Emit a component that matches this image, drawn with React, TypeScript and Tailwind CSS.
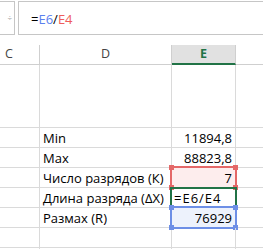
import React from "react";

const font = { fontFamily: '"Open Sans", "Liberation Sans", sans-serif' };

function Row({
  h,
  d,
  e,
  eAlign = "right",
  sel,
}: {
  h: string;
  d?: string;
  e?: string;
  eAlign?: "left" | "right";
  sel?: "red" | "green" | "blue";
}) {
  return (
    <div className={`flex ${h} border-b border-[#dadada]`}>
      <div className="w-[40px] shrink-0 border-r border-[#dadada]" />
      <div className="w-[132px] shrink-0 border-r border-[#dadada] flex items-end pl-[3px] pb-[2px] text-[13px] leading-none text-black whitespace-nowrap">
        {d}
      </div>
      <div
        className={`relative w-[64px] shrink-0 border-r border-[#dadada] flex items-end pb-[2px] text-[13px] leading-none text-black whitespace-nowrap ${
          eAlign === "right" ? "justify-end pr-[3px]" : "justify-start pl-[2px] tracking-[1px]"
        } ${sel === "red" ? "bg-[#fdeded]" : sel === "blue" ? "bg-[#edf2fc]" : ""}`}
      >
        {sel === "red" && (
          <div className="absolute left-[-2px] top-[-2px] right-[-2px] bottom-[-2px] border-2 border-[#e46868] pointer-events-none">
            <div className="absolute left-[-3px] top-[-3px] w-[5px] h-[5px] bg-[#e46868]" />
            <div className="absolute right-[-3px] top-[-3px] w-[5px] h-[5px] bg-[#e46868]" />
            <div className="absolute left-[-3px] bottom-[-3px] w-[5px] h-[5px] bg-[#e46868]" />
            <div className="absolute right-[-3px] bottom-[-3px] w-[5px] h-[5px] bg-[#e46868]" />
          </div>
        )}
        {sel === "blue" && (
          <div className="absolute left-[-2px] top-[-2px] right-[-2px] bottom-[-2px] border-2 border-[#6d8fe6] pointer-events-none">
            <div className="absolute left-[-3px] top-[-3px] w-[5px] h-[5px] bg-[#6d8fe6]" />
            <div className="absolute right-[-3px] top-[-3px] w-[5px] h-[5px] bg-[#6d8fe6]" />
            <div className="absolute left-[-3px] bottom-[-3px] w-[5px] h-[5px] bg-[#6d8fe6]" />
            <div className="absolute right-[-3px] bottom-[-3px] w-[5px] h-[5px] bg-[#6d8fe6]" />
          </div>
        )}
        {sel === "green" && (
          <div className="absolute left-[-2px] top-[-1px] right-[-2px] bottom-[-1px] border-2 border-[#217346] pointer-events-none" />
        )}
        <span className="relative">{e}</span>
      </div>
      <div className="flex-1" />
    </div>
  );
}

export default function App() {
  return (
    <div className="w-[263px] h-[249px] bg-white overflow-hidden" style={font}>
      {/* formula bar */}
      <div className="flex pt-[1px] h-[45px]">
        <div className="w-[15px] h-[34px] shrink-0 border border-[#c6c6c6] border-l-0 flex items-center justify-end pr-[2px]">
          <span className="text-[8px] text-[#9a9a9a] leading-none">÷</span>
        </div>
        <div className="ml-[3px] flex-1 h-[34px] border border-r-0 border-[#c6c6c6] flex items-center pl-[12px] pt-[3px] text-[13px] leading-none whitespace-nowrap">
          <span className="text-black">=</span>
          <span className="text-[#5b80ee]">E6</span>
          <span className="text-black">/</span>
          <span className="text-[#ee5d5d]">E4</span>
        </div>
      </div>
      {/* column headers */}
      <div className="flex h-[20px] text-[12.5px] leading-none">
        <div className="w-[40px] shrink-0 border-b border-r border-[#cfcfcf] flex items-center pl-[5px] text-[#444]">
          C
        </div>
        <div className="w-[132px] shrink-0 border-b border-r border-[#cfcfcf] flex items-center justify-center text-[#444]">
          D
        </div>
        <div className="w-[64px] shrink-0 bg-[#e1e1e1] border-b-2 border-r border-b-[#217346] border-r-[#cfcfcf] flex items-center justify-center font-bold text-[#217346] pt-[1px]">
          E
        </div>
        <div className="flex-1 border-b border-[#cfcfcf]" />
      </div>
      <Row h="h-[63px]" />
      <Row h="h-[20px]" d="Min" e="11894,8" />
      <Row h="h-[20px]" d="Max" e="88823,8" />
      <Row h="h-[20px]" d="Число разрядов (К)" e="7" sel="red" />
      <Row h="h-[20px]" d="Длина разряда (ΔX)" e="=E6/E4" eAlign="left" sel="green" />
      <Row h="h-[20px]" d="Размах (R)" e="76929" sel="blue" />
      <Row h="h-[20px]" />
      <Row h="h-[20px]" />
    </div>
  );
}
